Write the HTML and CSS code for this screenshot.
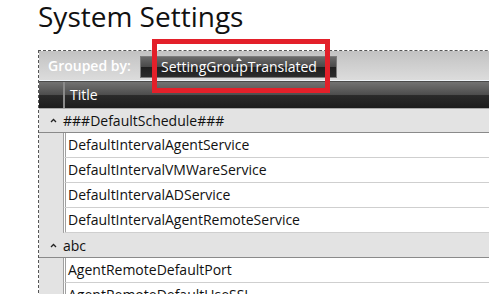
FILE: index.html
```html
<!DOCTYPE html>
<html lang="en">

<head>
    <meta charset="UTF-8">
    <title>System Settings</title>
    <link rel="stylesheet" href="styles.css">
</head>

<body>
    <div class="page">
        <h1 class="page-title">System Settings</h1>

        <div class="grid">
            <div class="group-panel">
                <span class="group-label">Grouped by:</span>
                <div class="group-chip">
                    <span class="sort-arrow"></span>
                    SettingGroupTranslated
                </div>
            </div>

            <div class="header-row">
                <div class="indent-cell"></div>
                <div class="header-cell">Title</div>
            </div>

            <div class="group-row first">
                <svg class="caret" width="7" height="5" viewBox="0 0 7 5"><polyline points="1,4 3.5,1.5 6,4" fill="none" stroke="#222" stroke-width="1.3"/></svg>
                <span>###DefaultSchedule###</span>
            </div>
            <div class="data-row"><div class="indent-cell"></div><div class="cell">DefaultIntervalAgentService</div></div>
            <div class="data-row"><div class="indent-cell"></div><div class="cell">DefaultIntervalVMWareService</div></div>
            <div class="data-row"><div class="indent-cell"></div><div class="cell">DefaultIntervalADService</div></div>
            <div class="data-row"><div class="indent-cell"></div><div class="cell">DefaultIntervalAgentRemoteService</div></div>

            <div class="group-row">
                <svg class="caret" width="7" height="5" viewBox="0 0 7 5"><polyline points="1,4 3.5,1.5 6,4" fill="none" stroke="#222" stroke-width="1.3"/></svg>
                <span>abc</span>
            </div>
            <div class="data-row"><div class="indent-cell"></div><div class="cell">AgentRemoteDefaultPort</div></div>
            <div class="data-row"><div class="indent-cell"></div><div class="cell">AgentRemoteDefaultUseSSL</div></div>
        </div>
    </div>

    <!-- annotation box drawn over the grouping chip -->
    <div class="highlight"></div>
</body>
</html>
```

FILE: styles.css
```css
* {
    margin: 0;
    padding: 0;
    box-sizing: border-box;
}

body {
    font-family: 'Open Sans', 'Noto Sans', sans-serif;
    background-color: #ffffff;
    color: #111111;
    overflow: hidden;
    height: 294px;
}

.page {
    padding-left: 38px;
}

.page-title {
    font-size: 28px;
    font-weight: normal;
    line-height: 32px;
    margin-bottom: 18px;
    color: #111;
}

.grid {
    width: 520px;
    border-top: 1px dashed #555;
    border-left: 1px dashed #555;
    font-size: 14px;
}

.group-panel {
    display: flex;
    align-items: center;
    height: 30px;
    padding-left: 9px;
    background: linear-gradient(#c2c2c2, #dcdcdc);
    border-bottom: 1px solid #eef3f8;
}

.group-label {
    width: 92px;
    color: #ffffff;
    font-weight: 600;
}

.group-chip {
    position: relative;
    width: 197px;
    height: 22px;
    margin-top: 3px;
    padding-left: 20px;
    line-height: 20px;
    color: #ffffff;
    border: 1px solid #7d7d7d;
    background: linear-gradient(#6a6a6a 0%, #4a4a4a 48%, #1f1f1f 52%, #2c2c2c 100%);
}

.sort-arrow {
    position: absolute;
    left: 95px;
    top: 1px;
    border-left: 3px solid transparent;
    border-right: 3px solid transparent;
    border-bottom: 3px solid #ffffff;
}

.header-row {
    display: flex;
    height: 28px;
    border-top: 1px solid #4a4a4a;
    border-bottom: 1px solid #a8a8a8;
    background: linear-gradient(#727272 0%, #4e4e4e 48%, #2a2a2a 52%, #1c1c1c 100%);
}

.header-row .indent-cell {
    background: none;
    border-right: 2px solid #8a8a8a;
}

.header-cell {
    padding-left: 5px;
    line-height: 26px;
    color: #ffffff;
}

.indent-cell {
    width: 24px;
    flex-shrink: 0;
    background-color: #e3e3e3;
}

.header-row .indent-cell {
    width: 26px;
}

.group-row {
    display: flex;
    align-items: center;
    height: 26px;
    margin-top: -1px;
    padding-left: 11px;
    background-color: #e3e3e3;
    border-top: 1px solid #8a8a8a;
    border-bottom: 1px solid #8a8a8a;
}

.group-row.first {
    margin-top: 0;
    border-top: none;
    height: 24px;
}

.caret {
    margin-right: 6px;
}

.data-row {
    display: flex;
    height: 25px;
}

.cell {
    flex: 1;
    padding-left: 2px;
    line-height: 24px;
    background-color: #ffffff;
    border-left: 3px double #a0a0a0;
    border-bottom: 1px solid #cfcfcf;
}

.highlight {
    position: absolute;
    left: 152px;
    top: 39px;
    width: 178px;
    height: 54px;
    border: 5px solid #e3202a;
}
```
